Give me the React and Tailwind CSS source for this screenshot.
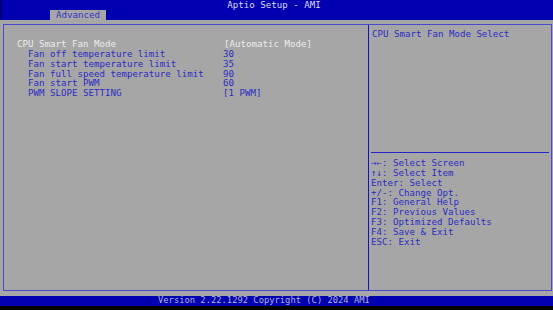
export default function App() {
  const rows = [
    { label: "CPU Smart Fan Mode", value: "[Automatic Mode]", top: true },
    { label: "Fan off temperature limit", value: "30" },
    { label: "Fan start temperature limit", value: "35" },
    { label: "Fan full speed temperature limit", value: "90" },
    { label: "Fan start PWM", value: "60" },
    { label: "PWM SLOPE SETTING", value: "[1 PWM]" },
  ];
  const help = [
    "\u2192\u2190: Select Screen",
    "\u2191\u2193: Select Item",
    "Enter: Select",
    "+/-: Change Opt.",
    "F1: General Help",
    "F2: Previous Values",
    "F3: Optimized Defaults",
    "F4: Save & Exit",
    "ESC: Exit",
  ];
  return (
    <div
      className="w-[553px] h-[310px] bg-black flex flex-col overflow-hidden text-[9.15px] leading-[9.85px] whitespace-pre"
      style={{ fontFamily: '"DejaVu Sans Mono", monospace' }}
    >
      {/* header */}
      <div className="h-[20px] bg-[#0000b0] border-l-2 border-[#00007a] flex flex-col">
        <div className="h-[10px] flex items-center justify-center text-[#dcdcf0] pt-[1px] pr-[7px]">
          Aptio Setup - AMI
        </div>
        <div className="h-[10px] pl-[48px] flex items-end">
          <div className="h-[10px] w-[56px] bg-[#a6a6a6] flex items-center justify-center text-[#3434c4] pt-[1px]">
            Advanced
          </div>
        </div>
      </div>

      {/* body */}
      <div className="h-[276px] bg-[#a6a6a6] pt-[4px] pl-[3px] pr-[1px] pb-[5px]">
        <div className="h-full border border-[#4a4ad0] flex">
          <div className="w-[365px] border-r border-[#1010c8] pt-[15px] pl-[13px]">
            {rows.map((r, i) => (
              <div key={i} className="flex h-[9.85px] items-center">
                <div
                  className={
                    "w-[206px] " +
                    (r.top ? "text-[#ececec]" : "pl-[11px] text-[#2c2cc4]")
                  }
                >
                  {r.label}
                </div>
                <div className={r.top ? "text-[#ececec] pl-[1px]" : "text-[#2c2cc4]"}>
                  {r.value}
                </div>
              </div>
            ))}
          </div>
          <div className="flex-1 flex flex-col">
            <div className="h-[127px] pt-[5px] pl-[3px] text-[#2c2cc4]">
              CPU Smart Fan Mode Select
            </div>
            <div className="mx-[2px] border-t border-[#2424c8]"></div>
            <div className="pt-[6px] pl-[2px] text-[#2c2cc4] flex flex-col">
              {help.map((h, i) => (
                <div key={i} className="h-[9.85px] flex items-center">
                  {h}
                </div>
              ))}
            </div>
          </div>
        </div>
      </div>

      {/* footer */}
      <div className="h-[10px] bg-[#0000b0] flex items-center pl-[158px] text-[#b4b4d8] text-[8.8px]">
        Version 2.22.1292 Copyright (C) 2024 AMI
      </div>
    </div>
  );
}
